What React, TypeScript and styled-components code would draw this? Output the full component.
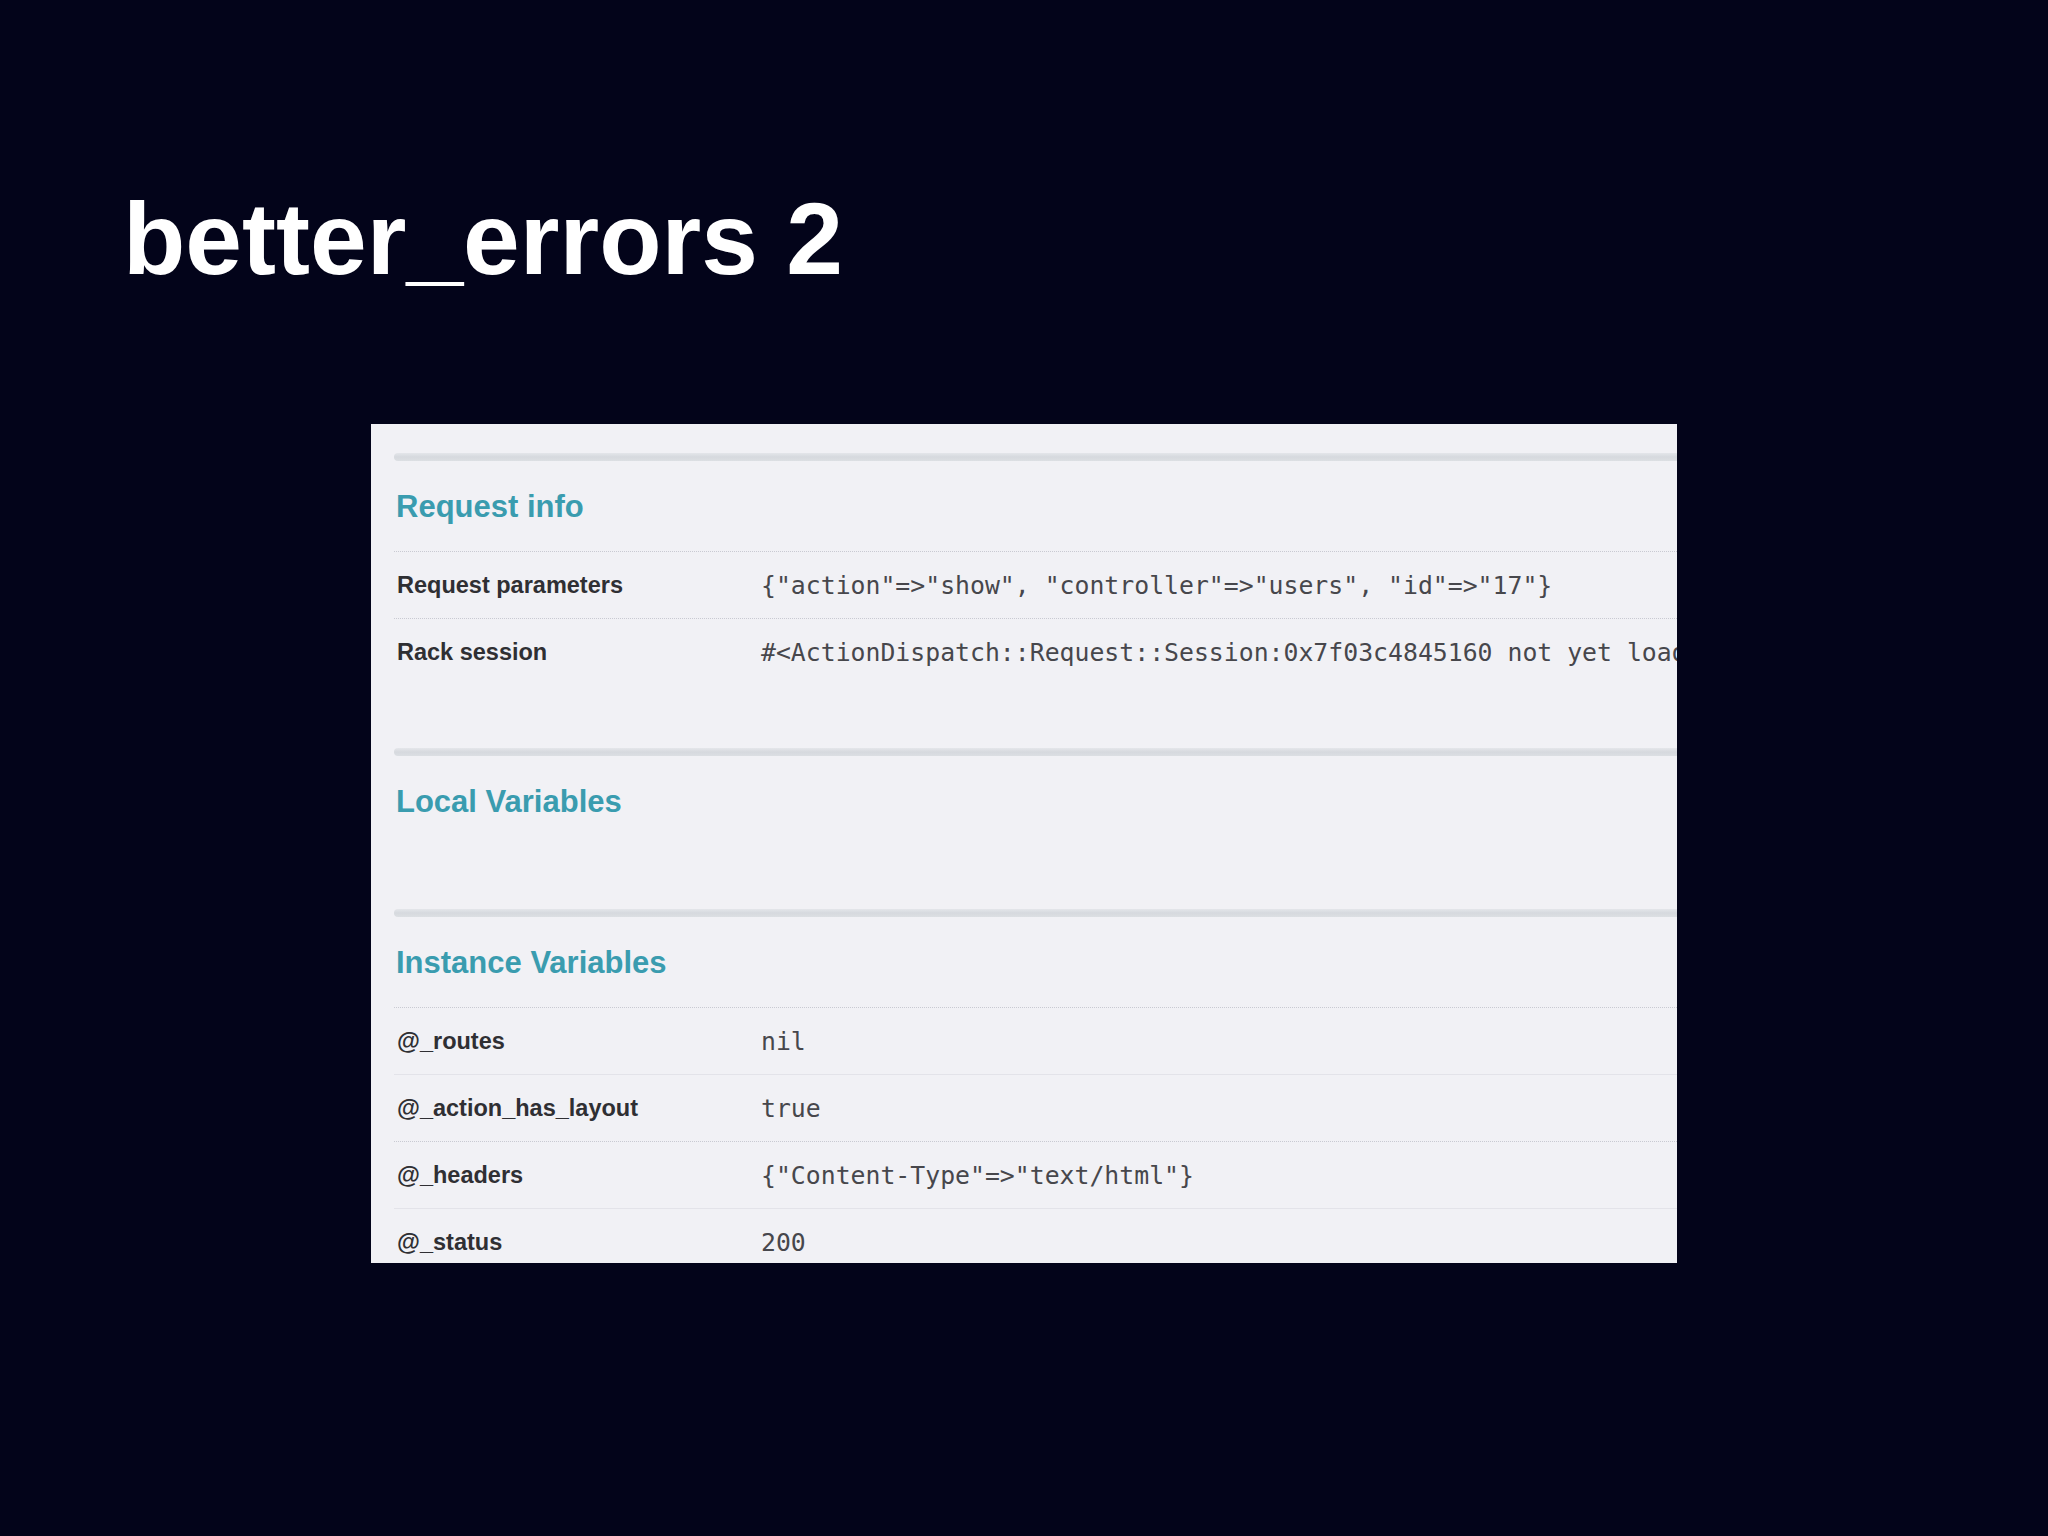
import React from 'react';
import styled, { createGlobalStyle } from 'styled-components';

const GlobalStyle = createGlobalStyle`
  html, body {
    margin: 0;
    padding: 0;
    background: #03041a;
  }
  body {
    width: 2048px;
    height: 1536px;
    overflow: hidden;
    font-family: "Liberation Sans", Arial, sans-serif;
  }
`;

type Row = { name: string; value: string; dotted?: boolean };
type Section = { title: string; rows: Row[] };

const SECTIONS: Section[] = [
  {
    title: 'Request info',
    rows: [
      { name: 'Request parameters', value: '{"action"=>"show", "controller"=>"users", "id"=>"17"}', dotted: true },
      { name: 'Rack session', value: '#<ActionDispatch::Request::Session:0x7f03c4845160 not yet loaded>', dotted: true },
    ],
  },
  { title: 'Local Variables', rows: [] },
  {
    title: 'Instance Variables',
    rows: [
      { name: '@_routes', value: 'nil', dotted: true },
      { name: '@_action_has_layout', value: 'true' },
      { name: '@_headers', value: '{"Content-Type"=>"text/html"}', dotted: true },
      { name: '@_status', value: '200' },
    ],
  },
];

const Slide = styled.div`
  display: flex;
  flex-direction: column;
  padding: 188px 0 0 123px;
`;

const Title = styled.h1`
  margin: 0;
  font-family: "Liberation Sans", Arial, sans-serif;
  font-weight: 700;
  font-size: 102px;
  line-height: 102px;
  color: #ffffff;
`;

// cropped browser screenshot, content runs past the right edge
const Shot = styled.div`
  margin: 134px 0 0 248px;
  width: 1306px;
  height: 839px;
  box-sizing: border-box;
  padding: 29px 0 0 23px;
  background: #f1f1f5;
  overflow: hidden;
`;

const Block = styled.section`
  padding-bottom: 63px;
`;

const Bar = styled.div`
  height: 8px;
  border-radius: 4px 0 0 4px;
  background: linear-gradient(#e4e6ea, #d6d9de 50%, #dcdfe3);
`;

const Heading = styled.h2`
  margin: 28px 0 26px 2px;
  font-family: "Liberation Sans", Arial, sans-serif;
  font-weight: 700;
  font-size: 31px;
  line-height: 36px;
  color: #3a9caf;
`;

const Table = styled.div`
  display: flex;
  flex-direction: column;
`;

const Line = styled.div<{ $dotted?: boolean }>`
  display: grid;
  grid-template-columns: 367px 1fr;
  align-items: center;
  height: 67px;
  box-sizing: border-box;
  border-top: 1px ${({ $dotted }) => ($dotted ? 'dotted #c9cad2' : 'solid #e3e3e9')};
`;

const Name = styled.div`
  padding-left: 3px;
  font-family: "Liberation Sans", Arial, sans-serif;
  font-weight: 700;
  font-size: 23.5px;
  color: #2f2f33;
  white-space: nowrap;
`;

const Value = styled.div`
  font-family: "DejaVu Sans Mono", "Liberation Mono", monospace;
  font-size: 24.8px;
  color: #47474c;
  white-space: nowrap;
`;

export default function App() {
  return (
    <>
      <GlobalStyle />
      <Slide>
        <Title>better_errors 2</Title>
        <Shot>
          {SECTIONS.map((s) => (
            <Block key={s.title}>
              <Bar />
              <Heading>{s.title}</Heading>
              <Table>
                {s.rows.map((r) => (
                  <Line key={r.name} $dotted={r.dotted}>
                    <Name>{r.name}</Name>
                    <Value>{r.value}</Value>
                  </Line>
                ))}
              </Table>
            </Block>
          ))}
        </Shot>
      </Slide>
    </>
  );
}
